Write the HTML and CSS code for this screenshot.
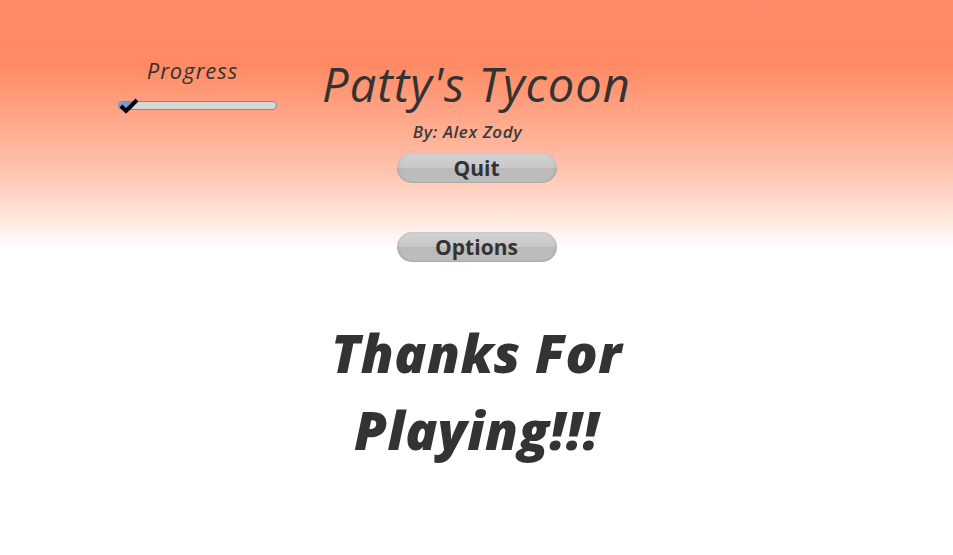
FILE: index.html
```html
<!DOCTYPE html>
<html>
<head>
<meta charset="utf-8">
<link rel="stylesheet" href="styles.css">
</head>
<body>
<div class="screen">
  <div class="header">
    <div class="progress">
      <div class="progress-label">Progress</div>
      <div class="slider">
        <div class="slider-fill"></div>
        <svg class="check" width="20" height="16" viewBox="0 0 20 16"><path d="M2 8 L7 13 L18 2" fill="none" stroke="#000" stroke-width="4" stroke-linejoin="miter"/></svg>
      </div>
    </div>
    <h1 class="title">Patty's Tycoon</h1>
    <div></div>
  </div>
  <div class="byline">By: Alex Zody</div>
  <button class="btn btn-quit">Quit</button>
  <button class="btn btn-options">Options</button>
  <div class="thanks">Thanks For<br>Playing!!!</div>
</div>
</body>
</html>
```
FILE: styles.css
```css
html, body {
  margin: 0;
  padding: 0;
  height: 100%;
}
body {
  background: linear-gradient(#ff8c68 0px, #ff8a64 65px, #ffc3ad 170px, #ffffff 250px, #ffffff 100%);
  font-family: "Open Sans", "DejaVu Sans", sans-serif;
  color: #333333;
  overflow: hidden;
}
.screen {
  display: flex;
  flex-direction: column;
  align-items: center;
  width: 953px;
  height: 555px;
}
.header {
  display: grid;
  grid-template-columns: 1fr auto 1fr;
  width: 100%;
  padding-top: 52px;
}
.progress {
  display: flex;
  flex-direction: column;
  align-items: center;
  width: 160px;
  margin-left: 117px;
}
.progress-label {
  font-style: italic;
  font-size: 22px;
  letter-spacing: 1px;
  line-height: 36px;
  margin-right: 9px;
  color: #333;
}
.slider {
  position: relative;
  width: 157px;
  height: 7px;
  margin-top: 13px;
  background: #d6d6d6;
  border: 1px solid #8a8a8a;
  border-radius: 4px;
}
.slider-fill {
  width: 13px;
  height: 7px;
  background: #6f9ed8;
  border-radius: 3px 0 0 3px;
}
.check {
  position: absolute;
  left: 0;
  top: -4px;
}
.title {
  margin: 0;
  font-weight: 400;
  font-style: italic;
  font-size: 47px;
  line-height: 64px;
  color: #333;
  letter-spacing: 1px;
}
.byline {
  margin-top: 4px;
  margin-right: 18px;
  font-style: italic;
  font-weight: 600;
  font-size: 17px;
  letter-spacing: 0.6px;
  line-height: 24px;
  color: #3a3a3a;
}
.btn {
  width: 160px;
  height: 30px;
  border: none;
  border-radius: 15px;
  background: linear-gradient(#d3d3d3 0%, #c8c8c8 48%, #bababa 52%, #bebebe 100%);
  box-shadow: inset 0 -1px 2px rgba(0,0,0,0.08), inset 2px 0 3px rgba(0,0,0,0.05), inset -2px 0 3px rgba(0,0,0,0.05);
  font-family: "Open Sans", "DejaVu Sans", sans-serif;
  font-weight: 700;
  font-size: 21px;
  color: #333;
  padding: 0;
}
.btn-quit {
  margin-top: 9px;
}
.btn-options {
  margin-top: 49px;
}
.thanks {
  margin-top: 52px;
  font-style: italic;
  font-weight: 800;
  font-size: 53px;
  letter-spacing: 0.5px;
  line-height: 77px;
  text-align: center;
  color: #333;
}
```
